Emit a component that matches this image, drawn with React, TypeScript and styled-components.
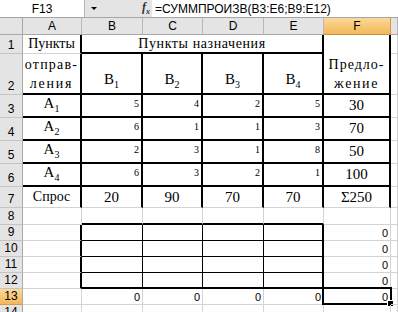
import React from "react";
import styled, { createGlobalStyle } from "styled-components";

const GlobalStyle = createGlobalStyle`
  body {
    margin: 0;
    background: #ffffff;
    overflow: hidden;
  }
`;

type Edge = "grid" | "thick" | "thin";

const edge = (e: Edge = "grid") =>
  e === "thick" ? "2px solid #000" : e === "thin" ? "1px solid #000" : "1px solid #d4d4d4";

const SERIF = `"Liberation Serif", "Times New Roman", serif`;
const SANS = `"Liberation Sans", Arial, sans-serif`;

const Window = styled.div`
  width: 398px;
  height: 312px;
  overflow: hidden;
  font-family: ${SANS};
`;

const FormulaBar = styled.div`
  display: flex;
  height: 18px;
  box-sizing: border-box;
  border-bottom: 1px solid #a5a5a5;
  font-size: 12px;
`;

const NameBox = styled.div`
  width: 85px;
  display: flex;
  align-items: center;
  justify-content: center;
  background: #fff;
  border-right: 1px solid #b5b5b5;
  box-sizing: border-box;
`;

const Tools = styled.div`
  width: 67px;
  display: flex;
  align-items: center;
  justify-content: space-between;
  background: #e4e4e4;
  padding: 0 2px 0 4px;
  box-sizing: border-box;
`;

const Arrow = styled.span`
  width: 0;
  height: 0;
  border-left: 3px solid transparent;
  border-right: 3px solid transparent;
  border-top: 3px solid #000;
  margin-left: 2px;
`;

const Fx = styled.span`
  font-family: ${SERIF};
  font-style: italic;
  font-weight: bold;
  font-size: 12px;
  color: #333;
  & sub {
    font-size: 8px;
  }
`;

const Formula = styled.div`
  flex: 1;
  display: flex;
  align-items: center;
  padding-left: 3px;
  background: #fff;
  white-space: nowrap;
`;

const Sheet = styled.div`
  display: grid;
  grid-template-columns: 23px 59px 61px 60px 61px 60px 67px 1fr;
  grid-template-rows: 17px 19px 41px 23px 23px 23px 23px 21px 17px repeat(6, 16px);
`;

const Corner = styled.div`
  background: #e4e4e4;
  border-right: 1px solid #a8a8a8;
  border-bottom: 1px solid #a8a8a8;
`;

const ColHead = styled.div<{ $active?: boolean }>`
  display: flex;
  align-items: center;
  justify-content: center;
  font-size: 12px;
  background: ${(p) => (p.$active ? "linear-gradient(#fbd999, #f3b85a)" : "#e4e4e4")};
  border-right: 1px solid ${(p) => (p.$active ? "#d49a45" : "#b8b8b8")};
  border-bottom: 1px solid ${(p) => (p.$active ? "#c89040" : "#a8a8a8")};
`;

const RowHead = styled.div<{ $active?: boolean }>`
  display: flex;
  align-items: flex-end;
  justify-content: center;
  padding-bottom: 1px;
  font-size: 12px;
  line-height: 14px;
  overflow: hidden;
  background: ${(p) => (p.$active ? "linear-gradient(#fbd999, #f3b85a)" : "#e4e4e4")};
  border-right: 1px solid #a8a8a8;
  border-bottom: 1px solid ${(p) => (p.$active ? "#d49a45" : "#c4c4c4")};
`;

const Cell = styled.div<{
  $r?: Edge;
  $b?: Edge;
  $h?: "flex-start" | "center" | "flex-end";
  $v?: "flex-start" | "center" | "flex-end";
  $cols?: number;
  $rows?: number;
}>`
  position: relative;
  box-sizing: border-box;
  min-width: 0;
  display: flex;
  flex-direction: column;
  align-items: ${(p) => p.$h ?? "center"};
  justify-content: ${(p) => p.$v ?? "center"};
  padding: 0 2px;
  grid-column: span ${(p) => p.$cols ?? 1};
  grid-row: span ${(p) => p.$rows ?? 1};
  border-right: ${(p) => edge(p.$r)};
  border-bottom: ${(p) => edge(p.$b)};
  font-family: ${SERIF};
  font-size: 14px;
  white-space: nowrap;
`;

const Line = styled.span<{ $spacing?: number }>`
  line-height: 19px;
  letter-spacing: ${(p) => p.$spacing ?? 0}px;
`;

const Label = styled.span`
  font-size: 15px;
  line-height: 17px;
`;

const Sub = styled.span`
  font-size: 10px;
  vertical-align: -4px;
`;

const Cost = styled.span`
  font-size: 10px;
  line-height: 12px;
  padding-top: 3px;
`;

const Big = styled.span`
  font-size: 15px;
  line-height: 17px;
`;

const Num = styled.span`
  font-family: ${SANS};
  font-size: 11px;
  line-height: 14px;
`;

const Selection = styled.div`
  position: absolute;
  top: -2px;
  left: -2px;
  right: -2px;
  bottom: -1px;
  border: 2px solid #000;
  pointer-events: none;
  &::after {
    content: "";
    position: absolute;
    right: -4px;
    bottom: -4px;
    width: 5px;
    height: 5px;
    background: #000;
    border: 1px solid #fff;
  }
`;

const costs = [
  [5, 4, 2, 5],
  [6, 1, 1, 3],
  [2, 3, 1, 8],
  [6, 3, 2, 1],
];
const supply = [30, 70, 50, 100];
const demand = [20, 90, 70, 70];
const headers = ["A", "B", "C", "D", "E", "F", ""];

const App: React.FC = () => {
  return (
    <Window>
      <GlobalStyle />
      <FormulaBar>
        <NameBox>F13</NameBox>
        <Tools>
          <Arrow />
          <Fx>
            f<sub>x</sub>
          </Fx>
        </Tools>
        <Formula>=СУММПРОИЗВ(B3:E6;B9:E12)</Formula>
      </FormulaBar>

      <Sheet>
        <Corner />
        {headers.map((h, i) => (
          <ColHead key={i} $active={h === "F"}>
            {h}
          </ColHead>
        ))}

        <RowHead>1</RowHead>
        <Cell $r="thick">Пункты</Cell>
        <Cell $cols={4} $r="thick" $b="thick">
          <Line $spacing={0.6}>Пункты назначения</Line>
        </Cell>
        <Cell $rows={2} $r="thick" $b="thick" $v="flex-end">
          <Line $spacing={1}>Предло-</Line>
          <Line $spacing={1.6}>жение</Line>
        </Cell>
        <Cell />

        <RowHead>2</RowHead>
        <Cell $r="thick" $b="thick">
          <Line $spacing={1.2}>отправ-</Line>
          <Line $spacing={1.8}>ления</Line>
        </Cell>
        {[1, 2, 3, 4].map((n) => (
          <Cell key={n} $r="thick" $b="thick" $v="flex-end">
            <Label>
              B<Sub>{n}</Sub>
            </Label>
          </Cell>
        ))}
        <Cell />

        {costs.map((row, i) => (
          <React.Fragment key={i}>
            <RowHead>{i + 3}</RowHead>
            <Cell $r="thick" $b="thick">
              <Label>
                A<Sub>{i + 1}</Sub>
              </Label>
            </Cell>
            {row.map((v, j) => (
              <Cell key={j} $r="thick" $b="thick" $h="flex-end" $v="flex-start">
                <Cost>{v}</Cost>
              </Cell>
            ))}
            <Cell $r="thick" $b="thick">
              <Big>{supply[i]}</Big>
            </Cell>
            <Cell />
          </React.Fragment>
        ))}

        <RowHead>7</RowHead>
        <Cell $r="thick">Спрос</Cell>
        {demand.map((d, j) => (
          <Cell key={j} $r="thick">
            <Big>{d}</Big>
          </Cell>
        ))}
        <Cell $r="thick">
          <Big>Σ250</Big>
        </Cell>
        <Cell />

        <RowHead>8</RowHead>
        <Cell />
        {[0, 1, 2, 3].map((j) => (
          <Cell key={j} $b="thick" />
        ))}
        <Cell />
        <Cell />

        {[9, 10, 11, 12].map((r) => {
          const b: Edge = r === 12 ? "thick" : "thin";
          return (
            <React.Fragment key={r}>
              <RowHead>{r}</RowHead>
              <Cell $r="thick" />
              <Cell $r="thin" $b={b} />
              <Cell $r="thin" $b={b} />
              <Cell $r="thin" $b={b} />
              <Cell $r="thick" $b={b} />
              <Cell $h="flex-end" $v="flex-end">
                <Num>0</Num>
              </Cell>
              <Cell />
            </React.Fragment>
          );
        })}

        <RowHead $active>13</RowHead>
        <Cell />
        {[0, 1, 2, 3].map((j) => (
          <Cell key={j} $h="flex-end" $v="flex-end">
            <Num>0</Num>
          </Cell>
        ))}
        <Cell $h="flex-end" $v="flex-end">
          <Num>0</Num>
          <Selection />
        </Cell>
        <Cell />

        <RowHead>14</RowHead>
        {[0, 1, 2, 3, 4, 5, 6].map((j) => (
          <Cell key={j} />
        ))}
      </Sheet>
    </Window>
  );
};

export default App;
